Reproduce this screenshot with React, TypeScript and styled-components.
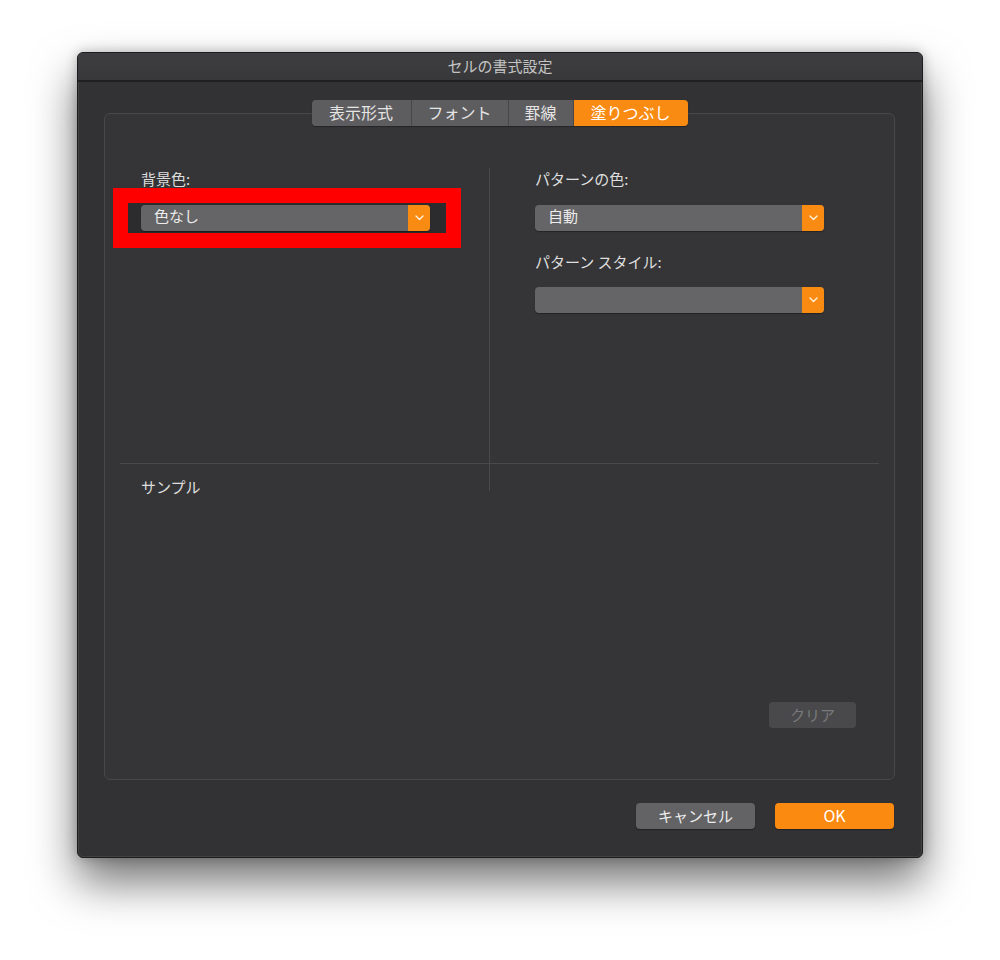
import React from 'react';
import styled, { createGlobalStyle } from 'styled-components';

const GlobalStyle = createGlobalStyle`
  body {
    margin: 0;
    background: #ffffff;
    font-family: "Noto Sans CJK JP", "Noto Sans", sans-serif;
  }
  * {
    box-sizing: border-box;
  }
`;

const Page = styled.div`
  width: 1000px;
  height: 960px;
  padding-top: 52px;
  background: #ffffff;
`;

const Window = styled.div`
  margin-left: 77px;
  width: 846px;
  height: 806px;
  background: #323234;
  border: 1px solid #1c1c1e;
  border-radius: 6px;
  box-shadow: 0 0 0 1px rgba(255, 255, 255, 0.08) inset, 0 24px 45px rgba(0, 0, 0, 0.55), 0 0 12px rgba(0, 0, 0, 0.25);
  display: flex;
  flex-direction: column;
  overflow: hidden;
`;

const TitleBar = styled.div`
  height: 29px;
  flex: none;
  display: flex;
  align-items: center;
  justify-content: center;
  background: linear-gradient(#3e3e40, #38383a);
  border-bottom: 2px solid #1f1f21;
  color: #c4c4c4;
  font-size: 15px;
  padding-bottom: 2px;
`;

const Body = styled.div`
  flex: 1;
  display: flex;
  flex-direction: column;
  padding: 18px 27px 0 26px;
`;

const TabBar = styled.div`
  align-self: center;
  display: flex;
  height: 26px;
  border-radius: 4px;
  overflow: hidden;
  position: relative;
  z-index: 1;
  box-shadow: 0 1px 1px rgba(0, 0, 0, 0.3);
`;

const Tab = styled.div<{ $w: number; $active?: boolean }>`
  width: ${p => p.$w}px;
  display: flex;
  align-items: center;
  justify-content: center;
  padding-bottom: 2px;
  font-size: 16px;
  color: ${p => (p.$active ? '#ffffff' : '#e4e4e4')};
  background: ${p => (p.$active ? '#f98a12' : '#5d5d5f')};
  border-left: 1px solid #474749;
  &:first-child {
    border-left: none;
  }
`;

const Panel = styled.div`
  margin-top: -13px;
  height: 667px;
  background: #353537;
  border: 1px solid #48484a;
  border-radius: 6px;
  padding: 0 15px;
  display: flex;
  flex-direction: column;
`;

const TopGrid = styled.div`
  height: 350px;
  flex: none;
  display: grid;
  grid-template-columns: 369px 1px 1fr;
  border-bottom: 1px solid #4a4a4c;
`;

const Column = styled.div<{ $pad: number }>`
  padding: 56px 0 0 ${p => p.$pad}px;
  display: flex;
  flex-direction: column;
`;

const Divider = styled.div`
  align-self: start;
  margin-top: 54px;
  height: 323px;
  background: #4a4a4c;
`;

const Label = styled.div<{ $gap?: number; $after?: number }>`
  font-size: 15px;
  line-height: 18px;
  color: #dedede;
  margin-top: ${p => p.$gap || 0}px;
  margin-bottom: ${p => p.$after || 0}px;
`;

const Highlight = styled.div`
  margin: 0 0 0 -28px;
  width: 348px;
  height: 60px;
  border: 15px solid #ff0000;
  background: #2c2c2e;
  padding: 2px 16px 2px 13px;
`;

const Select = styled.div`
  width: 289px;
  height: 26px;
  border-radius: 4px;
  background: #656567;
  display: flex;
  align-items: center;
  overflow: hidden;
  box-shadow: 0 1px 1px rgba(0, 0, 0, 0.35);
`;

const SelectText = styled.div`
  flex: 1;
  padding: 0 0 5px 13px;
  font-size: 15px;
  color: #ececec;
`;

const Arrow = styled.div`
  width: 22px;
  height: 100%;
  background: #f98a12;
  display: flex;
  align-items: center;
  justify-content: center;
`;

const Bottom = styled.div`
  flex: 1;
  display: flex;
  flex-direction: column;
  padding: 13px 23px 51px 21px;
`;

const SampleLabel = styled.div`
  font-size: 15px;
  line-height: 20px;
  color: #dedede;
  flex: 1;
`;

const ClearButton = styled.div`
  align-self: flex-end;
  width: 87px;
  height: 26px;
  border-radius: 4px;
  background: #49494b;
  color: #7a7a7c;
  font-size: 15px;
  padding-bottom: 2px;
  display: flex;
  align-items: center;
  justify-content: center;
`;

const Footer = styled.div`
  display: flex;
  justify-content: flex-end;
  gap: 20px;
  padding: 23px 1px 0 0;
`;

const Button = styled.div<{ $primary?: boolean }>`
  width: 119px;
  height: 26px;
  border-radius: 4px;
  background: ${p => (p.$primary ? '#fb8a10' : '#636365')};
  color: ${p => (p.$primary ? '#ffffff' : '#ececec')};
  font-size: ${p => (p.$primary ? 16 : 15)}px;
  padding-bottom: 2px;
  display: flex;
  align-items: center;
  justify-content: center;
  box-shadow: 0 1px 1px rgba(0, 0, 0, 0.35);
`;

const Chevron = () => (
  <svg width="9" height="6" viewBox="0 0 9 6">
    <path d="M1 1 L4.5 4.5 L8 1" fill="none" stroke="#fff3e0" strokeWidth="1.4" strokeLinecap="round" strokeLinejoin="round" />
  </svg>
);

const Dropdown = ({ value }: { value: string }) => (
  <Select>
    <SelectText>{value}</SelectText>
    <Arrow>
      <Chevron />
    </Arrow>
  </Select>
);

const tabs = [
  { label: '表示形式', w: 99 },
  { label: 'フォント', w: 97 },
  { label: '罫線', w: 65 },
  { label: '塗りつぶし', w: 115, active: true },
];

export default function App() {
  return (
    <Page>
      <GlobalStyle />
      <Window>
        <TitleBar>セルの書式設定</TitleBar>
        <Body>
          <TabBar>
            {tabs.map(t => (
              <Tab key={t.label} $w={t.w} $active={t.active}>
                {t.label}
              </Tab>
            ))}
          </TabBar>
          <Panel>
            <TopGrid>
              <Column $pad={21}>
                <Label>背景色:</Label>
                <Highlight>
                  <Dropdown value="色なし" />
                </Highlight>
              </Column>
              <Divider />
              <Column $pad={45}>
                <Label $after={17}>パターンの色:</Label>
                <Dropdown value="自動" />
                <Label $gap={22} $after={16}>パターン スタイル:</Label>
                <Dropdown value="" />
              </Column>
            </TopGrid>
            <Bottom>
              <SampleLabel>サンプル</SampleLabel>
              <ClearButton>クリア</ClearButton>
            </Bottom>
          </Panel>
          <Footer>
            <Button>キャンセル</Button>
            <Button $primary>OK</Button>
          </Footer>
        </Body>
      </Window>
    </Page>
  );
}
